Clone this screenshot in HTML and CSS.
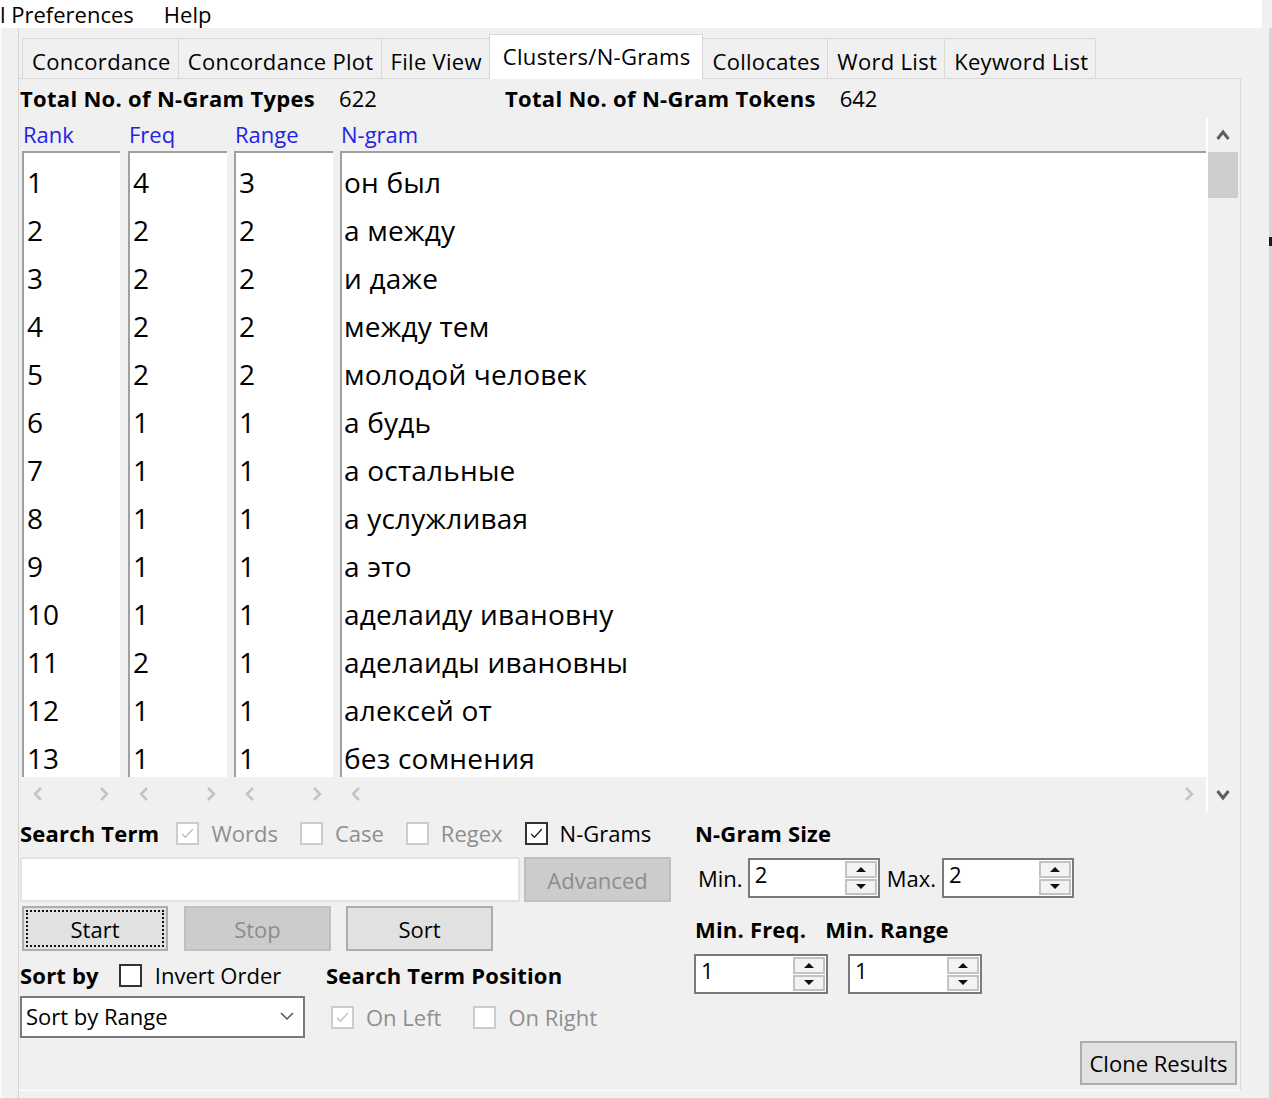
FILE: index.html
```html
<!DOCTYPE html>
<html>
<head>
<meta charset="utf-8">
<title>AntConc - Clusters/N-Grams</title>
<link rel="stylesheet" href="styles.css">
</head>
<body>
<div class="menubar">
  <span class="menu first">l Preferences</span>
  <span class="menu">Help</span>
</div>
<div class="window">
  <div class="gutter"></div>
  <div class="main">
    <div class="tabs">
      <div class="tab">Concordance</div>
      <div class="tab">Concordance Plot</div>
      <div class="tab">File View</div>
      <div class="tab active">Clusters/N-Grams</div>
      <div class="tab">Collocates</div>
      <div class="tab">Word List</div>
      <div class="tab">Keyword List</div>
    </div>
    <div class="panel">
      <div class="stats">
        <div class="stat"><b>Total No. of N-Gram Types</b><span>622</span></div>
        <div class="stat"><b>Total No. of N-Gram Tokens</b><span>642</span></div>
      </div>
      <div class="table">
        <div class="col c-rank">
          <div class="colhead">Rank</div>
          <div class="colbox">
            <div class="cell">1</div><div class="cell">2</div><div class="cell">3</div><div class="cell">4</div><div class="cell">5</div><div class="cell">6</div><div class="cell">7</div><div class="cell">8</div><div class="cell">9</div><div class="cell">10</div><div class="cell">11</div><div class="cell">12</div><div class="cell">13</div>
          </div>
          <div class="hscroll">
            <svg class="harrow" viewBox="0 0 10 14"><polyline points="8,1 2,7 8,13"/></svg>
            <svg class="harrow" viewBox="0 0 10 14"><polyline points="2,1 8,7 2,13"/></svg>
          </div>
        </div>
        <div class="col c-freq">
          <div class="colhead">Freq</div>
          <div class="colbox">
            <div class="cell">4</div><div class="cell">2</div><div class="cell">2</div><div class="cell">2</div><div class="cell">2</div><div class="cell">1</div><div class="cell">1</div><div class="cell">1</div><div class="cell">1</div><div class="cell">1</div><div class="cell">2</div><div class="cell">1</div><div class="cell">1</div>
          </div>
          <div class="hscroll">
            <svg class="harrow" viewBox="0 0 10 14"><polyline points="8,1 2,7 8,13"/></svg>
            <svg class="harrow" viewBox="0 0 10 14"><polyline points="2,1 8,7 2,13"/></svg>
          </div>
        </div>
        <div class="col c-range">
          <div class="colhead">Range</div>
          <div class="colbox">
            <div class="cell">3</div><div class="cell">2</div><div class="cell">2</div><div class="cell">2</div><div class="cell">2</div><div class="cell">1</div><div class="cell">1</div><div class="cell">1</div><div class="cell">1</div><div class="cell">1</div><div class="cell">1</div><div class="cell">1</div><div class="cell">1</div>
          </div>
          <div class="hscroll">
            <svg class="harrow" viewBox="0 0 10 14"><polyline points="8,1 2,7 8,13"/></svg>
            <svg class="harrow" viewBox="0 0 10 14"><polyline points="2,1 8,7 2,13"/></svg>
          </div>
        </div>
        <div class="col c-ngram">
          <div class="colhead">N-gram</div>
          <div class="colbox">
            <div class="cell">он был</div>
            <div class="cell">а между</div>
            <div class="cell">и даже</div>
            <div class="cell">между тем</div>
            <div class="cell">молодой человек</div>
            <div class="cell">а будь</div>
            <div class="cell">а остальные</div>
            <div class="cell">а услужливая</div>
            <div class="cell">а это</div>
            <div class="cell">аделаиду ивановну</div>
            <div class="cell">аделаиды ивановны</div>
            <div class="cell">алексей от</div>
            <div class="cell">без сомнения</div>
          </div>
          <div class="hscroll">
            <svg class="harrow" viewBox="0 0 10 14"><polyline points="8,1 2,7 8,13"/></svg>
            <svg class="harrow" viewBox="0 0 10 14"><polyline points="2,1 8,7 2,13"/></svg>
          </div>
        </div>
        <div class="vscroll">
          <div class="varrow"><svg viewBox="0 0 14 12"><polyline points="1.5,10 7,3 12.5,10"/></svg></div>
          <div class="thumb"></div>
          <div class="track"></div>
          <div class="varrow"><svg viewBox="0 0 14 12"><polyline points="1.5,2 7,9 12.5,2"/></svg></div>
        </div>
      </div>
      <div class="controls">
        <div class="left">
          <div class="row r-search">
            <b class="lbl">Search Term</b>
            <span class="check disabled"><span class="box"><svg viewBox="0 0 23 23"><polyline points="5,12 9,16 18,6"/></svg></span>Words</span>
            <span class="check disabled"><span class="box"></span>Case</span>
            <span class="check disabled"><span class="box"></span>Regex</span>
            <span class="check on"><span class="box"><svg viewBox="0 0 23 23"><polyline points="5,12 9,16 18,6"/></svg></span>N-Grams</span>
          </div>
          <div class="row r-input">
            <div class="textfield"></div>
            <div class="btn btn-adv dis">Advanced</div>
          </div>
          <div class="row r-buttons">
            <div class="btn btn-start"><span class="focus">Start</span></div>
            <div class="btn btn-stop dis">Stop</div>
            <div class="btn btn-sort">Sort</div>
          </div>
          <div class="grid2">
            <div class="row r-sortby">
              <b class="lbl">Sort by</b>
              <span class="check on"><span class="box"></span>Invert Order</span>
            </div>
            <div class="row r-sortby">
              <b class="lbl">Search Term Position</b>
            </div>
            <div class="select">
              <span>Sort by Range</span>
              <svg class="chev" viewBox="0 0 14 9"><polyline points="1,1 7,7 13,1"/></svg>
            </div>
            <div class="row r-pos">
              <span class="check disabled"><span class="box"><svg viewBox="0 0 23 23"><polyline points="5,12 9,16 18,6"/></svg></span>On Left</span>
              <span class="check disabled"><span class="box"></span>On Right</span>
            </div>
          </div>
        </div>
        <div class="right">
          <div class="row r-search"><b class="lbl">N-Gram Size</b></div>
          <div class="row r-size">
            <span class="spinlbl">Min.</span>
            <div class="spin s-size"><span class="spinval">2</span><span class="spinbtns"><span class="sb"><i class="tri up"></i></span><span class="sb"><i class="tri down"></i></span></span></div>
            <span class="spinlbl l-max">Max.</span>
            <div class="spin s-size"><span class="spinval">2</span><span class="spinbtns"><span class="sb"><i class="tri up"></i></span><span class="sb"><i class="tri down"></i></span></span></div>
          </div>
          <div class="row r-minlbl">
            <b class="lbl">Min. Freq.</b>
            <b class="lbl l-minrange">Min. Range</b>
          </div>
          <div class="row r-minspin">
            <div class="spin s-min"><span class="spinval">1</span><span class="spinbtns"><span class="sb"><i class="tri up"></i></span><span class="sb"><i class="tri down"></i></span></span></div>
            <div class="spin s-min s-gap"><span class="spinval">1</span><span class="spinbtns"><span class="sb"><i class="tri up"></i></span><span class="sb"><i class="tri down"></i></span></span></div>
          </div>
        </div>
        <div class="btn btn-clone">Clone Results</div>
      </div>
    </div>
  </div>
  <div class="rightstrip"><span class="mark"></span></div>
</div>
</body>
</html>
```
FILE: styles.css
```css
* { box-sizing: border-box; }

body {
  margin: 0;
  width: 1272px;
  height: 1098px;
  overflow: hidden;
  background: #f0f0f0;
  font-family: "Open Sans", "Noto Sans", sans-serif;
  font-size: 22px;
  color: #000;
}

/* menu bar */
.menubar {
  height: 28px;
  width: 1262px;
  background: #fff;
  display: flex;
  align-items: flex-start;
  line-height: 28px;
  white-space: nowrap;
}
.menu.first { margin-left: 0; margin-right: 30px; }

/* window */
.window {
  display: flex;
  height: 1070px;
}
.gutter {
  width: 18px;
  border-left: 2px solid #fafafa;
}
.main {
  width: 1223px;
  border-left: 1px solid #d4d4d4;
  display: flex;
  flex-direction: column;
}
.rightstrip {
  width: 31px;
  border-right: 3px solid #d6d6d6;
  display: flex;
  justify-content: flex-end;
}
.mark {
  width: 3px;
  height: 9px;
  margin-top: 209px;
  margin-right: -3px;
  background: #1a1a1a;
}

/* tabs */
.tabs {
  height: 50px;
  display: flex;
  align-items: flex-end;
  padding-left: 3px;
}
.tab {
  height: 40px;
  padding: 7px 7px 0 9px;
  line-height: 30px;
  letter-spacing: 0.3px;
  border: 1px solid #d9d9d9;
  border-bottom: none;
  margin-right: -1px;
  background: #f0f0f0;
  white-space: nowrap;
}
.tab.active {
  height: 45px;
  background: #fff;
  margin-bottom: -1px;
  padding: 6px 12px 0 13px;
  position: relative;
  z-index: 1;
}

/* panel */
.panel {
  height: 1013px;
  border-top: 1px solid #d9d9d9;
  border-right: 1px solid #d9d9d9;
  border-bottom: 1px solid #ffffff;
  padding-left: 1px;
  display: flex;
  flex-direction: column;
}
.stats {
  height: 39px;
  padding-top: 4px;
  line-height: 30px;
  display: grid;
  grid-template-columns: 485px auto;
}
.stat { display: flex; gap: 24px; white-space: nowrap; }
.stat b { letter-spacing: 0.3px; }

/* table */
.table {
  height: 694px;
  margin-left: 2px;
  display: flex;
}
.col { display: flex; flex-direction: column; }
.c-rank { width: 98px; margin-right: 8px; }
.c-freq { width: 99px; margin-right: 7px; }
.c-range { width: 99px; margin-right: 7px; }
.c-ngram { width: 868px; border-right: 2px solid #fff; }

.colhead {
  height: 33px;
  padding: 1px 0 0 1px;
  line-height: 30px;
  color: #2323e6;
}
.colbox {
  height: 626px;
  background: #fff;
  border-top: 2px solid #a0a0a0;
  border-left: 2px solid #a0a0a0;
  padding: 5px 0 0 3px;
  overflow: hidden;
  font-size: 28px;
}
.c-ngram .colbox { padding-left: 2px; letter-spacing: 0.2px; }
.cell { height: 48px; line-height: 48px; white-space: nowrap; }

.hscroll {
  height: 35px;
  display: flex;
  justify-content: space-between;
  align-items: center;
  padding: 0 11px 2px 11px;
}
.c-ngram .hscroll { padding-right: 12px; }
.harrow { width: 10px; height: 14px; }
.harrow polyline { fill: none; stroke: #c4c4c4; stroke-width: 2.6; }

.vscroll {
  width: 30px;
  display: flex;
  flex-direction: column;
}
.varrow {
  height: 34px;
  display: flex;
  align-items: center;
  justify-content: center;
}
.varrow svg { width: 14px; height: 12px; }
.varrow polyline { fill: none; stroke: #5f5f5f; stroke-width: 3; }
.thumb { height: 46px; background: #cdcdcd; }
.track { flex: 1; }

/* controls */
.controls {
  flex: 1;
  display: flex;
}
.left { width: 652px; }
.right { margin-left: 23px; }
.row { display: flex; align-items: center; white-space: nowrap; }
.lbl { font-weight: bold; letter-spacing: 0.2px; }
.r-search { margin-top: 6px; height: 30px; }
.r-search .lbl { margin-right: 17px; }

.check { display: inline-flex; align-items: center; gap: 12px; margin-right: 22px; }
.check .box {
  width: 23px;
  height: 23px;
  background: #fff;
  border: 2px solid #333;
  display: flex;
}
.check .box svg { width: 19px; height: 19px; }
.check .box polyline { fill: none; stroke: #222; stroke-width: 1.6; }
.check.disabled { color: #8f8f8f; }
.check.disabled .box { border-color: #cccccc; }
.check.disabled .box polyline { stroke: #bdbdbd; }

.r-input { margin-top: 9px; }
.textfield {
  width: 500px;
  height: 45px;
  background: #fff;
  border: 2px solid #e3e3e3;
}

.btn {
  height: 45px;
  display: flex;
  align-items: center;
  justify-content: center;
  background: #e1e1e1;
  border: 2px solid #adadad;
  white-space: nowrap;
}
.btn.dis { background: #cccccc; border-color: #bfbfbf; color: #8d8d8d; }
.btn-adv { width: 147px; margin-left: 4px; }

.r-buttons { margin-top: 4px; }
.btn-start { width: 146px; margin-left: 2px; padding: 2px; }
.btn-start .focus {
  flex: 1;
  align-self: stretch;
  display: flex;
  align-items: center;
  justify-content: center;
  border: 2px dotted #111;
}
.btn-stop { width: 147px; margin-left: 16px; }
.btn-sort { width: 147px; margin-left: 15px; }

.grid2 {
  display: grid;
  grid-template-columns: 306px auto;
  row-gap: 6px;
}
.r-sortby { margin-top: 9px; height: 30px; }
.r-sortby .lbl { margin-right: 20px; }
.r-sortby .check { gap: 13px; }
.select {
  width: 285px;
  height: 42px;
  background: #fff;
  border: 2px solid #7a7a7a;
  display: flex;
  align-items: center;
  justify-content: space-between;
  padding: 0 9px 2px 4px;
}
.chev { width: 14px; height: 9px; }
.chev polyline { fill: none; stroke: #555; stroke-width: 1.5; }
.r-pos { padding-left: 5px; }
.r-pos .check { margin-right: 32px; }

/* right column */
.r-size { margin-top: 10px; }
.spinlbl { margin-left: 3px; margin-right: 5px; }
.l-max { margin-left: 7px; margin-right: 6px; }
.spin {
  height: 40px;
  display: flex;
  background: #fff;
  border: 2px solid #7a7a7a;
  padding: 1px 0 1px 5px;
}
.s-size { width: 132px; }
.s-min { width: 134px; }
.s-gap { margin-left: 20px; }
.spinval { flex: 1; line-height: 26px; }
.spinbtns {
  width: 32px;
  margin-right: 1px;
  display: flex;
  flex-direction: column;
  gap: 1px;
}
.sb {
  flex: 1;
  background: #f3f3f3;
  border: 2px solid #c3c3c3;
  display: flex;
  align-items: center;
  justify-content: center;
}
.tri { width: 0; height: 0; border-left: 5px solid transparent; border-right: 5px solid transparent; }
.tri.up { border-bottom: 5px solid #111; }
.tri.down { border-top: 5px solid #111; }

.r-minlbl { margin-top: 16px; height: 30px; }
.l-minrange { margin-left: 19px; }
.r-minspin { margin-top: 10px; margin-left: -1px; }

.btn-clone {
  width: 157px;
  height: 44px;
  margin-left: auto;
  margin-right: 3px;
  margin-bottom: 5px;
  align-self: flex-end;
}
```
